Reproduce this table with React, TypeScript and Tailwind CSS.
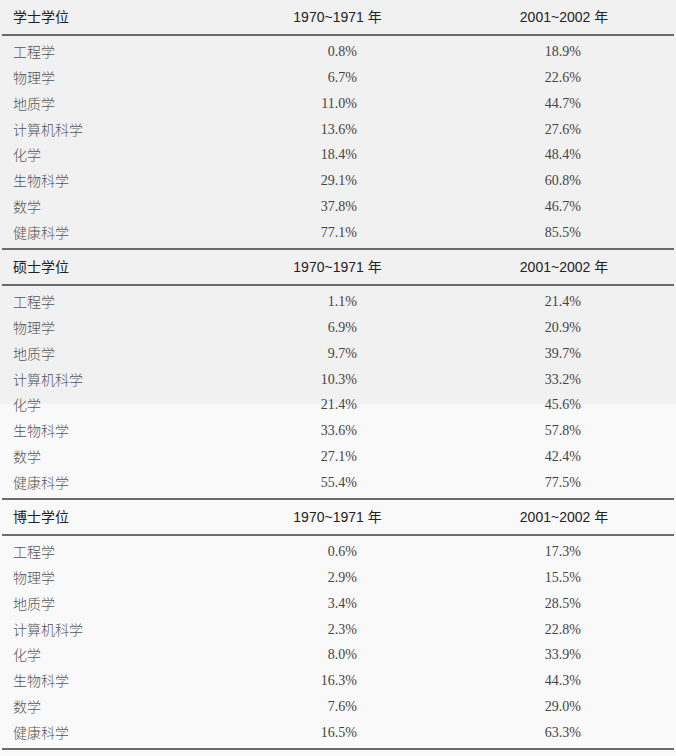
import React from "react";

type Section = {
  title: string;
  rows: [string, string, string][];
};

const sections: Section[] = [
  {
    title: "学士学位",
    rows: [
      ["工程学", "0.8%", "18.9%"],
      ["物理学", "6.7%", "22.6%"],
      ["地质学", "11.0%", "44.7%"],
      ["计算机科学", "13.6%", "27.6%"],
      ["化学", "18.4%", "48.4%"],
      ["生物科学", "29.1%", "60.8%"],
      ["数学", "37.8%", "46.7%"],
      ["健康科学", "77.1%", "85.5%"],
    ],
  },
  {
    title: "硕士学位",
    rows: [
      ["工程学", "1.1%", "21.4%"],
      ["物理学", "6.9%", "20.9%"],
      ["地质学", "9.7%", "39.7%"],
      ["计算机科学", "10.3%", "33.2%"],
      ["化学", "21.4%", "45.6%"],
      ["生物科学", "33.6%", "57.8%"],
      ["数学", "27.1%", "42.4%"],
      ["健康科学", "55.4%", "77.5%"],
    ],
  },
  {
    title: "博士学位",
    rows: [
      ["工程学", "0.6%", "17.3%"],
      ["物理学", "2.9%", "15.5%"],
      ["地质学", "3.4%", "28.5%"],
      ["计算机科学", "2.3%", "22.8%"],
      ["化学", "8.0%", "33.9%"],
      ["生物科学", "16.3%", "44.3%"],
      ["数学", "7.6%", "29.0%"],
      ["健康科学", "16.5%", "63.3%"],
    ],
  },
];

const sans = "font-['Liberation_Sans','Noto_Sans_CJK_SC',sans-serif]";
const cjk = "font-['Noto_Sans_CJK_SC',serif]";
const serif = "font-['Liberation_Serif',serif]";

const App: React.FC = () => {
  return (
    <div className="w-[676px] h-[756px] bg-[linear-gradient(#f1f1f1_0,#f1f1f1_404px,#f9f9f9_404px)] overflow-hidden">
      <div className="mx-[2px] w-[672px]">
        {sections.map((s) => (
          <div key={s.title}>
            <div
              className={`grid grid-cols-[223px_225px_224px] items-center h-[36px] border-b-2 border-[#6b6b6b] text-[14px] text-[#222] ${sans}`}
            >
              <div className="pl-[11px]">{s.title}</div>
              <div className="text-center">1970~1971 年</div>
              <div className="text-center pl-[4px]">2001~2002 年</div>
            </div>
            <div className="pt-[3px] pb-[3px] border-b-2 border-[#6b6b6b]">
              {s.rows.map((r) => (
                <div
                  key={r[0]}
                  className="grid grid-cols-[223px_225px_224px] items-center h-[25.75px] text-[14px]"
                >
                  <div className={`pl-[11px] font-light text-[#555] ${cjk}`}>{r[0]}</div>
                  <div className={`text-right pr-[93px] text-[#444] ${serif}`}>{r[1]}</div>
                  <div className={`text-right pr-[93px] text-[#444] ${serif}`}>{r[2]}</div>
                </div>
              ))}
            </div>
          </div>
        ))}
      </div>
    </div>
  );
};

export default App;
